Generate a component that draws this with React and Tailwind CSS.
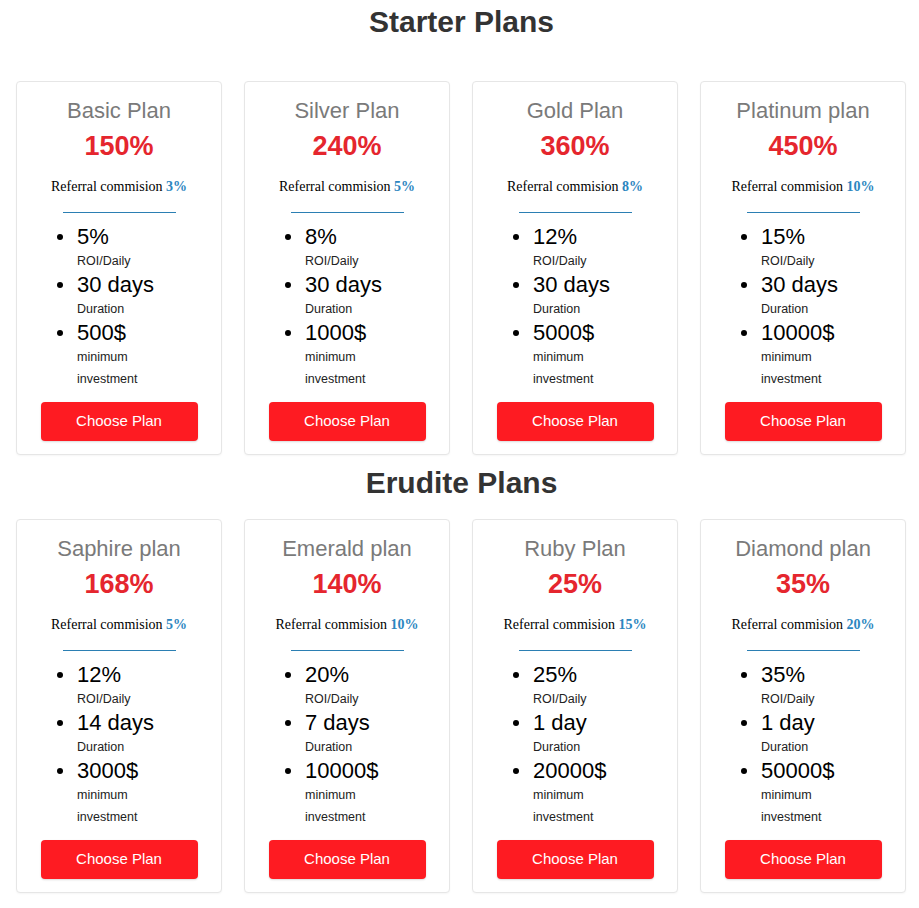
const starter = [
  { name: "Basic Plan", pct: "150%", ref: "3%", roi: "5%", dur: "30 days", min: "500$" },
  { name: "Silver Plan", pct: "240%", ref: "5%", roi: "8%", dur: "30 days", min: "1000$" },
  { name: "Gold Plan", pct: "360%", ref: "8%", roi: "12%", dur: "30 days", min: "5000$" },
  { name: "Platinum plan", pct: "450%", ref: "10%", roi: "15%", dur: "30 days", min: "10000$" },
];
const erudite = [
  { name: "Saphire plan", pct: "168%", ref: "5%", roi: "12%", dur: "14 days", min: "3000$" },
  { name: "Emerald plan", pct: "140%", ref: "10%", roi: "20%", dur: "7 days", min: "10000$" },
  { name: "Ruby Plan", pct: "25%", ref: "15%", roi: "25%", dur: "1 day", min: "20000$" },
  { name: "Diamond plan", pct: "35%", ref: "20%", roi: "35%", dur: "1 day", min: "50000$" },
];

function Item({ value, children }) {
  return (
    <li className="flex">
      <div className="w-[20px] h-[26px] flex items-center">
        <span className="block w-[6px] h-[6px] rounded-full bg-black" />
      </div>
      <div className="flex flex-col">
        <span className="text-[22px] leading-[26px] text-black">{value}</span>
        {children}
      </div>
    </li>
  );
}

function Card({ p }) {
  return (
    <div className="w-[206px] h-[374px] border border-[#e6e6e6] rounded-[4px] shadow-[0_1px_2px_rgba(0,0,0,0.04)] bg-white flex flex-col items-center pt-[15px]">
      <div className="text-[22px] leading-[28px] text-[#7a7a7a]">{p.name}</div>
      <div className="mt-[6px] text-[27px] leading-[30px] font-bold text-[#e5262e]">{p.pct}</div>
      <div className="mt-[16px] text-[14px] leading-[20px] text-black font-['Liberation_Serif',serif]">
        Referral commision <span className="font-bold text-[#2c86bf]">{p.ref}</span>
      </div>
      <div className="mt-[15px] w-[113px] h-[1px] bg-[#2b7fb3]" />
      <ul className="self-stretch pl-[40px] mt-[11px]">
        <Item value={p.roi}>
          <span className="text-[12.5px] leading-[22px] text-[#222]">ROI/Daily</span>
        </Item>
        <Item value={p.dur}>
          <span className="text-[12.5px] leading-[22px] text-[#222]">Duration</span>
        </Item>
        <Item value={p.min}>
          <span className="text-[12.5px] leading-[22px] text-[#222]">minimum</span>
          <span className="text-[12.5px] leading-[22px] text-[#222]">investment</span>
        </Item>
      </ul>
      <button className="mt-[12px] w-[157px] h-[39px] rounded-[4px] bg-[#fe1b22] text-white text-[15px] shadow-[0_1px_2px_rgba(0,0,0,0.15)]">
        Choose Plan
      </button>
    </div>
  );
}

export default function App() {
  return (
    <div className="w-[919px] min-h-[908px] bg-white font-['Liberation_Sans',Arial,sans-serif] pl-[16px]">
      <h2 className="h-[44px] text-[30px] leading-[44px] font-bold text-[#333] text-center w-[891px]">Starter Plans</h2>
      <div className="mt-[37px] flex gap-[22px] w-[891px]">
        {starter.map((p) => (
          <Card key={p.name} p={p} />
        ))}
      </div>
      <h2 className="mt-[6px] h-[44px] text-[30px] leading-[44px] font-bold text-[#333] text-center w-[891px]">Erudite Plans</h2>
      <div className="mt-[14px] flex gap-[22px] w-[891px]">
        {erudite.map((p) => (
          <Card key={p.name} p={p} />
        ))}
      </div>
    </div>
  );
}
